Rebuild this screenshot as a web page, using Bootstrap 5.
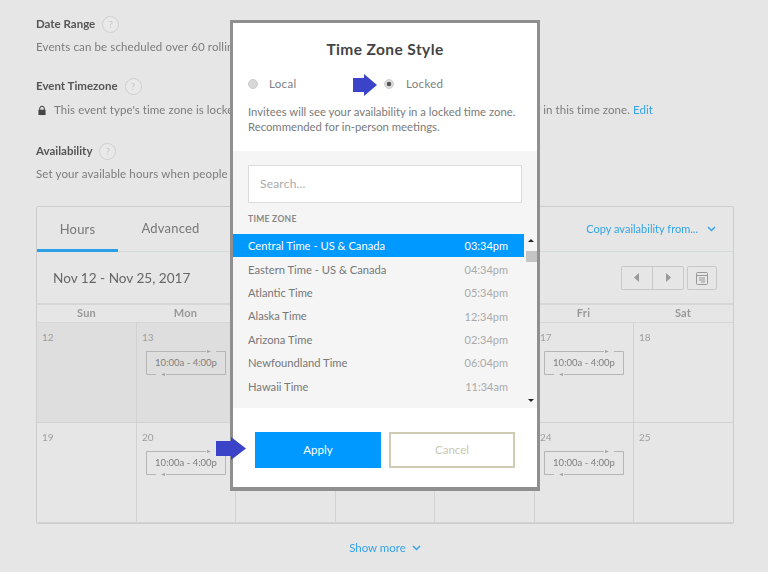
<!DOCTYPE html>
<html lang="en">
<head>
<meta charset="utf-8">
<title>Event availability</title>
<link href="https://cdn.jsdelivr.net/npm/bootstrap@5.3.0/dist/css/bootstrap.min.css" rel="stylesheet">
<style>
html,body{height:100%}
body{background:#e6e6e6;font-family:"Lato","Liberation Sans",sans-serif;color:#777;font-size:11.5px;overflow:hidden}
.stage{position:relative;width:768px;height:572px;overflow:hidden;padding:15px 35px 0 36px;filter:blur(.35px)}
.sec-title{font-weight:700;font-size:11.5px;color:#555;height:18px;gap:7px}
.help{width:17px;height:17px;border:1px solid #cfcfcf;border-radius:50%;color:#c8c8c8;font-size:10px;font-weight:400;background:#e9e9e9}
.sec-text{white-space:nowrap;height:18px;margin-top:5px;color:#7c7c7c;letter-spacing:.12px}
.sec{height:65px}
.sec-first{height:62px}
.lock-line{letter-spacing:.07px;padding-top:2px}
.lock-ico{margin:0 8px 0 2px}
.panel-box{height:318px;width:698px;margin-top:-1px;border:1px solid #cdcdcd;border-radius:2px;background:#e6e6e6}
.tabs-row{height:45px;border-bottom:1px solid #d5dadd}
.tab-a,.tab-b{font-size:13px;height:45px;letter-spacing:.2px}
.tab-a{width:81px;color:#777;border-bottom:3px solid #2d9fe6;margin-bottom:-1px;padding-top:3px}
.tab-b{width:105px;color:#777}
.copy-link{color:#35a4e8;font-size:11px;margin-right:17px;gap:9px}
.date-row{height:53px;padding:0 16px 0 16px;border-bottom:2px solid #d6d6d6}
.date-txt{font-size:13.6px;color:#666;padding-top:2px}
.pager{width:63px;height:24px;border:1px solid #c9c9c9;border-radius:2px}
.pager>div{flex:1 1 0}
.pager>div+div{border-left:1px solid #c9c9c9}
.cal-btn{width:30px;height:24px;border:1px solid #c9c9c9;border-radius:2px;margin-left:3px}
.cal-grid{display:grid;grid-template-columns:99px 99px 100px 99px 100px 99px 100px;grid-template-rows:18px 100px 100px}
.day-h{font-weight:700;color:#989898;font-size:11px;border-bottom:1px solid #d6d6d6;letter-spacing:.2px}
.day-c{padding:7px 5px;position:relative;font-size:10px;color:#9e9e9e;border-left:1px solid #d2d2d2;border-bottom:1px solid #d2d2d2}
.day-c:nth-child(7n+1){border-left:0}
.day-dim{background:#dedede}
.chip{position:absolute;left:9px;top:28px;width:80px;height:24px;font-size:9.5px;color:#7e7e7e}
.chip svg{position:absolute;left:0;top:0;overflow:visible}
.more{margin-top:15px;color:#35a4e8;font-size:11.5px;gap:6px;width:698px}
.tz-modal{position:absolute;left:230px;top:20px;width:310px;height:471px;background:#fff;border:3px solid #8f8f8f;border-bottom-width:4px}
.tz-title{font-size:15.5px;font-weight:700;color:#444;height:21px;margin-top:15px;letter-spacing:.4px}
.radio-row{height:20px;margin-top:15px;padding-left:15px;font-size:11.5px;color:#808080;letter-spacing:.3px}
.rdo{width:10px;height:10px;border-radius:50%;background:#d8d8d8;border:1px solid #ccc}
.rdo-on{background:radial-gradient(circle,#555 0 2px,#ddd 2.6px)}
.lbl-local{margin-left:11px;width:82px}
.lbl-lock{margin-left:12px}
.radio-gap{width:33px;height:22px}
.tz-desc{padding-left:15px;margin:10px 0 0;line-height:15px;color:#7a7a7a;font-size:11.3px;white-space:nowrap}
.tz-gray{background:#f5f5f5;height:257px;margin-top:17px;padding-top:14px;position:relative}
.tz-search{margin-left:15px;width:274px;height:38px;background:#fff;border:1px solid #dcdcdc;padding-left:11px;font-size:12px;color:#aaa;letter-spacing:.2px}
.tz-label{margin:11px 0 0 15px;height:11px;font-size:8.5px;font-weight:700;color:#888;letter-spacing:.3px;line-height:11px}
.tz-list{margin-top:9px;width:291px}
.tz-row{height:23.4px;padding:2px 16px 0 15px;font-size:11.2px;color:#777}
.tz-row span:last-child{color:#aaa;font-size:11px}
.tz-sel,.tz-sel span:last-child{background:#0099ff;color:#fff}
.sb-up,.sb-dn,.sb-th{position:absolute;left:293px}
.sb-up{top:88px;left:295px;border:3px solid transparent;border-top:0;border-bottom:3px solid #222}
.sb-dn{top:248px;left:295px;border:3px solid transparent;border-bottom:0;border-top:3px solid #222}
.sb-th{top:100px;width:11px;height:11px;background:#c4c4c4}
.tz-actions{padding:24px 0 0 22px;gap:8px}
.act-apply,.act-cancel{width:126px;height:36px;font-size:11.5px;border-radius:0}
.act-apply{background:#0099ff;color:#fff;border:0}
.act-cancel{background:#fff;color:#c9c6b5;border:2px solid #cfcbb3}
.blue-arrow{position:absolute}
.arrow-a{left:353px;top:74px}
.arrow-b{left:216px;top:437px}
.edit-link{color:#35a4e8}
</style>
</head>
<body>
<div class="stage">
  <div class="sec sec-first">
    <div class="sec-title d-flex align-items-center">Date Range <span class="help d-flex align-items-center justify-content-center">?</span></div>
    <div class="sec-text">Events can be scheduled over 60 rolling days into the future.</div>
  </div>
  <div class="sec">
    <div class="sec-title d-flex align-items-center">Event Timezone <span class="help d-flex align-items-center justify-content-center">?</span></div>
    <div class="sec-text lock-line d-flex align-items-center">
      <svg class="lock-ico" width="8" height="11" viewBox="0 0 9 11"><path d="M2 5V3.2a2.500 2.500 0 0 1 5 0V5" fill="none" stroke="#444" stroke-width="1.200"/><rect x="0.500" y="4.600" width="8" height="6" fill="#444"/></svg>
      <span>This event type's time zone is locked, which means your invitees will always see your availability in this time zone. <span class="edit-link">Edit</span></span>
    </div>
  </div>
  <div class="sec">
    <div class="sec-title d-flex align-items-center">Availability <span class="help d-flex align-items-center justify-content-center">?</span></div>
    <div class="sec-text">Set your available hours when people can schedule meetings with you.</div>
  </div>
  <div class="panel-box">
    <div class="tabs-row d-flex align-items-center">
      <div class="tab-a d-flex align-items-center justify-content-center">Hours</div>
      <div class="tab-b d-flex align-items-center justify-content-center">Advanced</div>
      <div class="copy-link ms-auto d-flex align-items-center">Copy availability from... <svg width="9" height="6" viewBox="0 0 9 6"><path d="M1 1l3.500 3.500L8 1" fill="none" stroke="#35a4e8" stroke-width="1.500"/></svg></div>
    </div>
    <div class="date-row d-flex align-items-center">
      <div class="date-txt">Nov 12 - Nov 25, 2017</div>
      <div class="pager ms-auto d-flex">
        <div class="d-flex align-items-center justify-content-center"><svg width="6" height="9" viewBox="0 0 6 9"><path d="M5 0v9L0 4.500z" fill="#999"/></svg></div>
        <div class="d-flex align-items-center justify-content-center"><svg width="6" height="9" viewBox="0 0 6 9"><path d="M1 0v9l5-4.500z" fill="#999"/></svg></div>
      </div>
      <div class="cal-btn d-flex align-items-center justify-content-center">
        <svg width="12" height="14" viewBox="0 0 12 14" fill="none" stroke="#999"><rect x=".5" y="1.500" width="11" height="12" rx="1"/><path d="M.5 4.500h11M3 7h6M3 9h6M5 11h4"/></svg>
      </div>
    </div>
    <div class="cal-grid">
      <div class="day-h d-flex align-items-center justify-content-center">Sun</div>
      <div class="day-h d-flex align-items-center justify-content-center">Mon</div>
      <div class="day-h"></div>
      <div class="day-h"></div>
      <div class="day-h"></div>
      <div class="day-h d-flex align-items-center justify-content-center">Fri</div>
      <div class="day-h d-flex align-items-center justify-content-center">Sat</div>

      <div class="day-c day-dim">12</div>
      <div class="day-c day-dim">13
        <div class="chip d-flex align-items-center justify-content-center"><svg width="80" height="24" viewBox="0 0 80 24" fill="none" stroke="#b5b5b5"><path d="M60 .5H.5v23H10M20 23.500h59.500V.5H70"/><path d="M61 -1l4 1.500-4 1.500zM19 22l-4 1.500 4 1.500z" fill="#a5a5a5" stroke="none"/></svg>10:00a - 4:00p</div>
      </div>
      <div class="day-c"></div>
      <div class="day-c"></div>
      <div class="day-c"></div>
      <div class="day-c">17
        <div class="chip d-flex align-items-center justify-content-center"><svg width="80" height="24" viewBox="0 0 80 24" fill="none" stroke="#b5b5b5"><path d="M60 .5H.5v23H10M20 23.500h59.500V.5H70"/><path d="M61 -1l4 1.500-4 1.500zM19 22l-4 1.500 4 1.500z" fill="#a5a5a5" stroke="none"/></svg>10:00a - 4:00p</div>
      </div>
      <div class="day-c">18</div>

      <div class="day-c">19</div>
      <div class="day-c">20
        <div class="chip d-flex align-items-center justify-content-center"><svg width="80" height="24" viewBox="0 0 80 24" fill="none" stroke="#b5b5b5"><path d="M60 .5H.5v23H10M20 23.500h59.500V.5H70"/><path d="M61 -1l4 1.500-4 1.500zM19 22l-4 1.500 4 1.500z" fill="#a5a5a5" stroke="none"/></svg>10:00a - 4:00p</div>
      </div>
      <div class="day-c"></div>
      <div class="day-c"></div>
      <div class="day-c"></div>
      <div class="day-c">24
        <div class="chip d-flex align-items-center justify-content-center"><svg width="80" height="24" viewBox="0 0 80 24" fill="none" stroke="#b5b5b5"><path d="M60 .5H.5v23H10M20 23.500h59.500V.5H70"/><path d="M61 -1l4 1.500-4 1.500zM19 22l-4 1.500 4 1.500z" fill="#a5a5a5" stroke="none"/></svg>10:00a - 4:00p</div>
      </div>
      <div class="day-c">25</div>
    </div>
  </div>
  <div class="more d-flex align-items-center justify-content-center">Show more <svg width="9" height="6" viewBox="0 0 9 6"><path d="M1 1l3.500 3.500L8 1" fill="none" stroke="#35a4e8" stroke-width="1.500"/></svg></div>

  <div class="tz-modal">
    <div class="tz-title text-center">Time Zone Style</div>
    <div class="radio-row d-flex align-items-center">
      <span class="rdo"></span><span class="lbl-local">Local</span>
      <span class="radio-gap"></span>
      <span class="rdo rdo-on"></span><span class="lbl-lock">Locked</span>
    </div>
    <p class="tz-desc">Invitees will see your availability in a locked time zone.<br>Recommended for in-person meetings.</p>
    <div class="tz-gray">
      <div class="tz-search d-flex align-items-center">Search...</div>
      <div class="tz-label">TIME ZONE</div>
      <div class="tz-list">
        <div class="tz-row tz-sel d-flex justify-content-between align-items-center"><span>Central Time - US &amp; Canada</span><span>03:34pm</span></div>
        <div class="tz-row d-flex justify-content-between align-items-center"><span>Eastern Time - US &amp; Canada</span><span>04:34pm</span></div>
        <div class="tz-row d-flex justify-content-between align-items-center"><span>Atlantic Time</span><span>05:34pm</span></div>
        <div class="tz-row d-flex justify-content-between align-items-center"><span>Alaska Time</span><span>12:34pm</span></div>
        <div class="tz-row d-flex justify-content-between align-items-center"><span>Arizona Time</span><span>02:34pm</span></div>
        <div class="tz-row d-flex justify-content-between align-items-center"><span>Newfoundland Time</span><span>06:04pm</span></div>
        <div class="tz-row d-flex justify-content-between align-items-center"><span>Hawaii Time</span><span>11:34am</span></div>
      </div>
      <span class="sb-up"></span><span class="sb-th"></span><span class="sb-dn"></span>
    </div>
    <div class="tz-actions d-flex">
      <button class="btn act-apply" type="button">Apply</button>
      <button class="btn act-cancel" type="button">Cancel</button>
    </div>
  </div>

  <svg class="blue-arrow arrow-a" width="24" height="22" viewBox="0 0 24 22"><path d="M0 4h11V0l13 11-13 11v-4H0z" fill="#3b44c8"/></svg>
  <svg class="blue-arrow arrow-b" width="30" height="23" viewBox="0 0 30 23"><path d="M0 4h15V0l15 11.500L15 23v-4H0z" fill="#3b44c8"/></svg>
</div>
<script src="https://cdn.jsdelivr.net/npm/bootstrap@5.3.0/dist/js/bootstrap.bundle.min.js"></script>
</body>
</html>
